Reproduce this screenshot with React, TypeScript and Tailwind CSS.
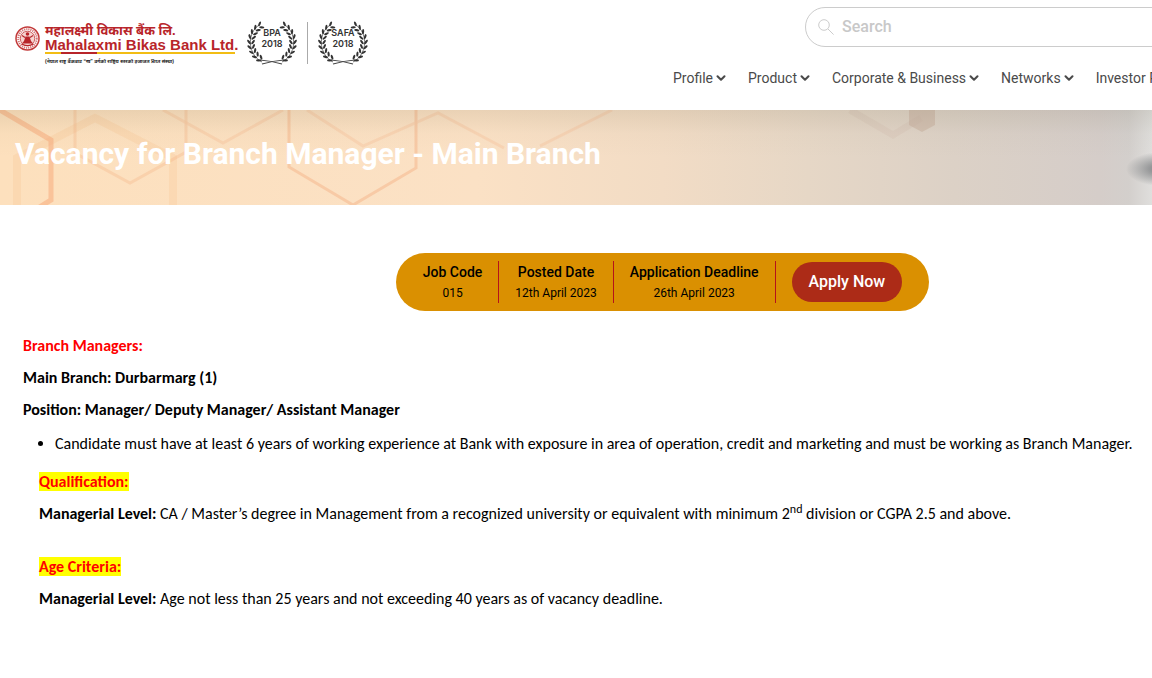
import { ChevronDown } from "lucide-react";

const navItems = ["Profile", "Product", "Corporate & Business", "Networks", "Investor Relation"];

const jobFacts = [
  { label: "Job Code", value: "015" },
  { label: "Posted Date", value: "12th April 2023" },
  { label: "Application Deadline", value: "26th April 2023" },
];

// Leaf angles on the left branch, mirrored for the right one
const leafAngles = [-122, -136, -150, -164, -178, -192, -206, -220, -234];

function Emblem() {
  return (
    <svg viewBox="0 0 50 50" className="mt-[2px] size-[25px] shrink-0" aria-hidden="true">
      <circle cx="25" cy="25" r="23" fill="#fff" stroke="#c23a3a" strokeWidth="3" />
      <circle cx="25" cy="25" r="18.5" fill="none" stroke="#c23a3a" strokeWidth="4" strokeDasharray="2.4 1.8" opacity="0.7" />
      <circle cx="25" cy="25" r="14.5" fill="#f6d5d1" stroke="#c23a3a" strokeWidth="1.6" />
      <circle cx="25" cy="16" r="3.6" fill="#b8252a" />
      <path d="M21 21h8l3 9 4 5H14l4-5z" fill="#b8252a" />
      <path d="M20 23l-6-4M30 23l6-4M13 36c7 4 17 4 24 0" stroke="#b8252a" strokeWidth="2.4" fill="none" />
    </svg>
  );
}

function Branch() {
  return (
    <g>
      <path d="M12 5C3 11 1 24 6 33c2 4 5 7 9 9" fill="none" stroke="#444" strokeWidth="0.7" />
      {leafAngles.map((deg) => {
        const rad = (deg * Math.PI) / 180;
        const x = 25 + 21 * Math.cos(rad);
        const y = 22.5 + 20 * Math.sin(rad);
        return (
          <g key={deg} transform={`translate(${x} ${y}) rotate(${deg + 90})`} fill="#333">
            <ellipse cx="1" cy="-1.8" rx="2.6" ry="1.1" transform="rotate(-35)" />
            <ellipse cx="1" cy="1.8" rx="2.6" ry="1.1" transform="rotate(35)" />
          </g>
        );
      })}
      <path d="M13 40c7 .5 15 2 22 4" fill="none" stroke="#444" strokeWidth="1.2" />
    </g>
  );
}

function Award({ name }: { name: string }) {
  return (
    <svg viewBox="0 0 50 46" className="h-[46px] w-[50px]" role="img" aria-label={`${name} 2018`}>
      <Branch />
      <g transform="translate(50 0) scale(-1 1)">
        <Branch />
      </g>
      <g fontSize="9" fontWeight="600" textAnchor="middle" fill="#333" className="font-['Inter',sans-serif]">
        <text x="25" y="16">{name}</text>
        <text x="25" y="27">2018</text>
      </g>
    </svg>
  );
}

function Header() {
  return (
    <header className="flex h-[110px] justify-between px-[15px]">
      <div className="flex items-start pt-5">
        <a href="#" className="flex items-start gap-[5px] pt-1">
          <Emblem />
          <span className="flex w-[190px] flex-col whitespace-nowrap font-['Liberation_Sans','Noto_Sans',sans-serif]">
            <span className="text-[13px] font-bold leading-[14px] text-[#b8252a]">महालक्ष्मी विकास बैंक लि.</span>
            <span className="text-[15px] font-bold leading-[14px] text-[#b8252a]">Mahalaxmi Bikas Bank Ltd.</span>
            <span className="flex h-[2px] bg-[#f2bd14]">
              <span className="ml-4 w-9 bg-[#b8252a]" />
            </span>
            <span className="pt-[3px] text-[5px] font-bold leading-[8px] text-[#222]">
              (नेपाल राष्ट्र बैंकबाट “ख” वर्गको राष्ट्रिय स्तरको इजाजत प्राप्त संस्था)
            </span>
          </span>
        </a>
        <div className="ml-3 flex items-center gap-[10px]">
          <Award name="BPA" />
          <span className="h-[42px] w-px bg-[#aaa]" />
          <Award name="SAFA" />
        </div>
      </div>

      <div className="flex w-[637px] flex-col items-end pt-[7px]">
        <label className="flex h-10 w-[505px] items-center gap-2 rounded-full border border-[#ccc] px-3">
          <svg viewBox="0 0 16 16" className="size-4" fill="none" stroke="#ccc" aria-hidden="true">
            <circle cx="6" cy="6" r="5.3" />
            <path d="M10 10l5.6 5.6" />
          </svg>
          <input
            type="text"
            aria-label="Search"
            placeholder="Search"
            className="flex-1 text-[16px] font-medium outline-none placeholder:text-[#c8c8c8]"
          />
        </label>
        <nav className="mt-5 flex w-full gap-5">
          {navItems.map((item) => (
            <a key={item} href="#" className="flex items-center gap-px whitespace-nowrap text-[14px] leading-[22px] text-[#4a4a4a]">
              {item}
              <ChevronDown size={14} strokeWidth={3.5} />
            </a>
          ))}
        </nav>
      </div>
    </header>
  );
}

function BannerArt() {
  return (
    <svg
      viewBox="0 0 1325 95"
      preserveAspectRatio="xMinYMin slice"
      className="absolute inset-0 h-full w-full"
      fill="none"
      aria-hidden="true"
    >
      <defs>
        <linearGradient id="base">
          <stop offset="0" stopColor="#fde0bd" />
          <stop offset="0.36" stopColor="#fbe1c5" />
          <stop offset="0.5" stopColor="#f2dcc5" />
          <stop offset="0.61" stopColor="#e6d7c6" />
          <stop offset="0.72" stopColor="#dcd1c6" />
          <stop offset="0.83" stopColor="#d5cdc9" />
          <stop offset="0.852" stopColor="#d3cfcc" />
          <stop offset="0.87" stopColor="#e0dfdd" />
          <stop offset="1" stopColor="#dcdcdc" />
        </linearGradient>
        <linearGradient id="shade" x2="0" y2="1">
          <stop offset="0" stopColor="#4d4828" stopOpacity="0.1" />
          <stop offset="0.25" stopColor="#4d4828" stopOpacity="0.02" />
          <stop offset="0.5" stopColor="#4d4828" stopOpacity="0" />
        </linearGradient>
        <radialGradient id="spot">
          <stop offset="0" stopColor="#858789" />
          <stop offset="0.3" stopColor="#858789" stopOpacity="0.8" />
          <stop offset="1" stopColor="#858789" stopOpacity="0" />
        </radialGradient>
      </defs>
      <rect width="1325" height="95" fill="url(#base)" />
      <path d="M17 95V48L95 8l78 40v47" stroke="#f8c795" strokeWidth="8" opacity="0.3" />
      <path d="M0 0l51 30v60l-13 8" stroke="#f8ab7c" strokeWidth="5" opacity="0.55" />
      <g stroke="#f5b083" strokeWidth="3" opacity="0.45">
        <path d="M75 0v43l55 30 56-31V0" opacity="0.7" />
        <path d="M163 0l60 33 60-33" opacity="0.6" />
        <path d="M289 0v57l64 38 63-37V0" />
        <path d="M307 0l56 36 75-33 66 35M540 36l72-36" opacity="0.55" />
      </g>
      <path d="M850 0l43 25 28-17" stroke="#cbb5a5" strokeWidth="7" opacity="0.2" />
      <path d="M909 0h26v15l-13 7-13-7z" fill="#c9b1a1" opacity="0.55" />
      <ellipse cx="1160" cy="59" rx="34" ry="17" fill="url(#spot)" />
      <rect width="1325" height="95" fill="url(#shade)" />
    </svg>
  );
}

function JobSummary() {
  return (
    <section className="flex items-center rounded-full bg-[#da9001] py-2 pl-[11px] pr-[27px]">
      <dl className="flex">
        {jobFacts.map(({ label, value }) => (
          <div key={label} className="border-r border-[#b5121b] px-4 text-center text-black">
            <dt className="text-[14px] font-medium leading-[22px]">{label}</dt>
            <dd className="text-[12px] leading-5">{value}</dd>
          </div>
        ))}
      </dl>
      <button type="button" className="ml-4 h-10 rounded-full bg-[#ac2b17] px-[17px] text-[16px] font-medium text-white">
        Apply Now
      </button>
    </section>
  );
}

export default function App() {
  return (
    <div className="min-h-screen overflow-x-hidden bg-white font-['Roboto',sans-serif]">
      <div className="min-w-[1325px]">
        <Header />

        <div className="relative h-[95px] px-[15px] pt-[26px]">
          <BannerArt />
          <h1 className="relative text-[30px] font-bold leading-9 text-white">Vacancy for Branch Manager - Main Branch</h1>
        </div>

        <main className="pt-12">
          <div className="flex justify-center">
            <JobSummary />
          </div>

          <article className="px-[23px] pt-6 font-['Carlito','Lato',sans-serif] text-[16px] leading-[22px] text-black">
            <h2 className="font-bold text-[#f00]">Branch Managers:</h2>
            <h3 className="mt-[10px] font-bold">Main Branch: Durbarmarg (1)</h3>
            <h3 className="mt-[10px] font-bold">Position: Manager/ Deputy Manager/ Assistant Manager</h3>
            <ul className="mt-3 list-disc pl-8">
              <li>
                Candidate must have at least 6 years of working experience at Bank with exposure in area of operation,
                credit and marketing and must be working as Branch Manager.
              </li>
            </ul>
            <div className="pl-4">
              <h3 className="mt-4 font-bold">
                <mark className="bg-[#ff0] text-[#f00]">Qualification:</mark>
              </h3>
              <p className="mt-[10px]">
                <strong>Managerial Level:</strong> CA / Master’s degree in Management from a recognized university or
                equivalent with minimum 2<sup>nd</sup> division or CGPA 2.5 and above.
              </p>
              <h3 className="mt-[31px] font-bold">
                <mark className="bg-[#ff0] text-[#f00]">Age Criteria:</mark>
              </h3>
              <p className="mt-[10px]">
                <strong>Managerial Level:</strong> Age not less than 25 years and not exceeding 40 years as of vacancy
                deadline.
              </p>
            </div>
          </article>
        </main>
      </div>
    </div>
  );
}
